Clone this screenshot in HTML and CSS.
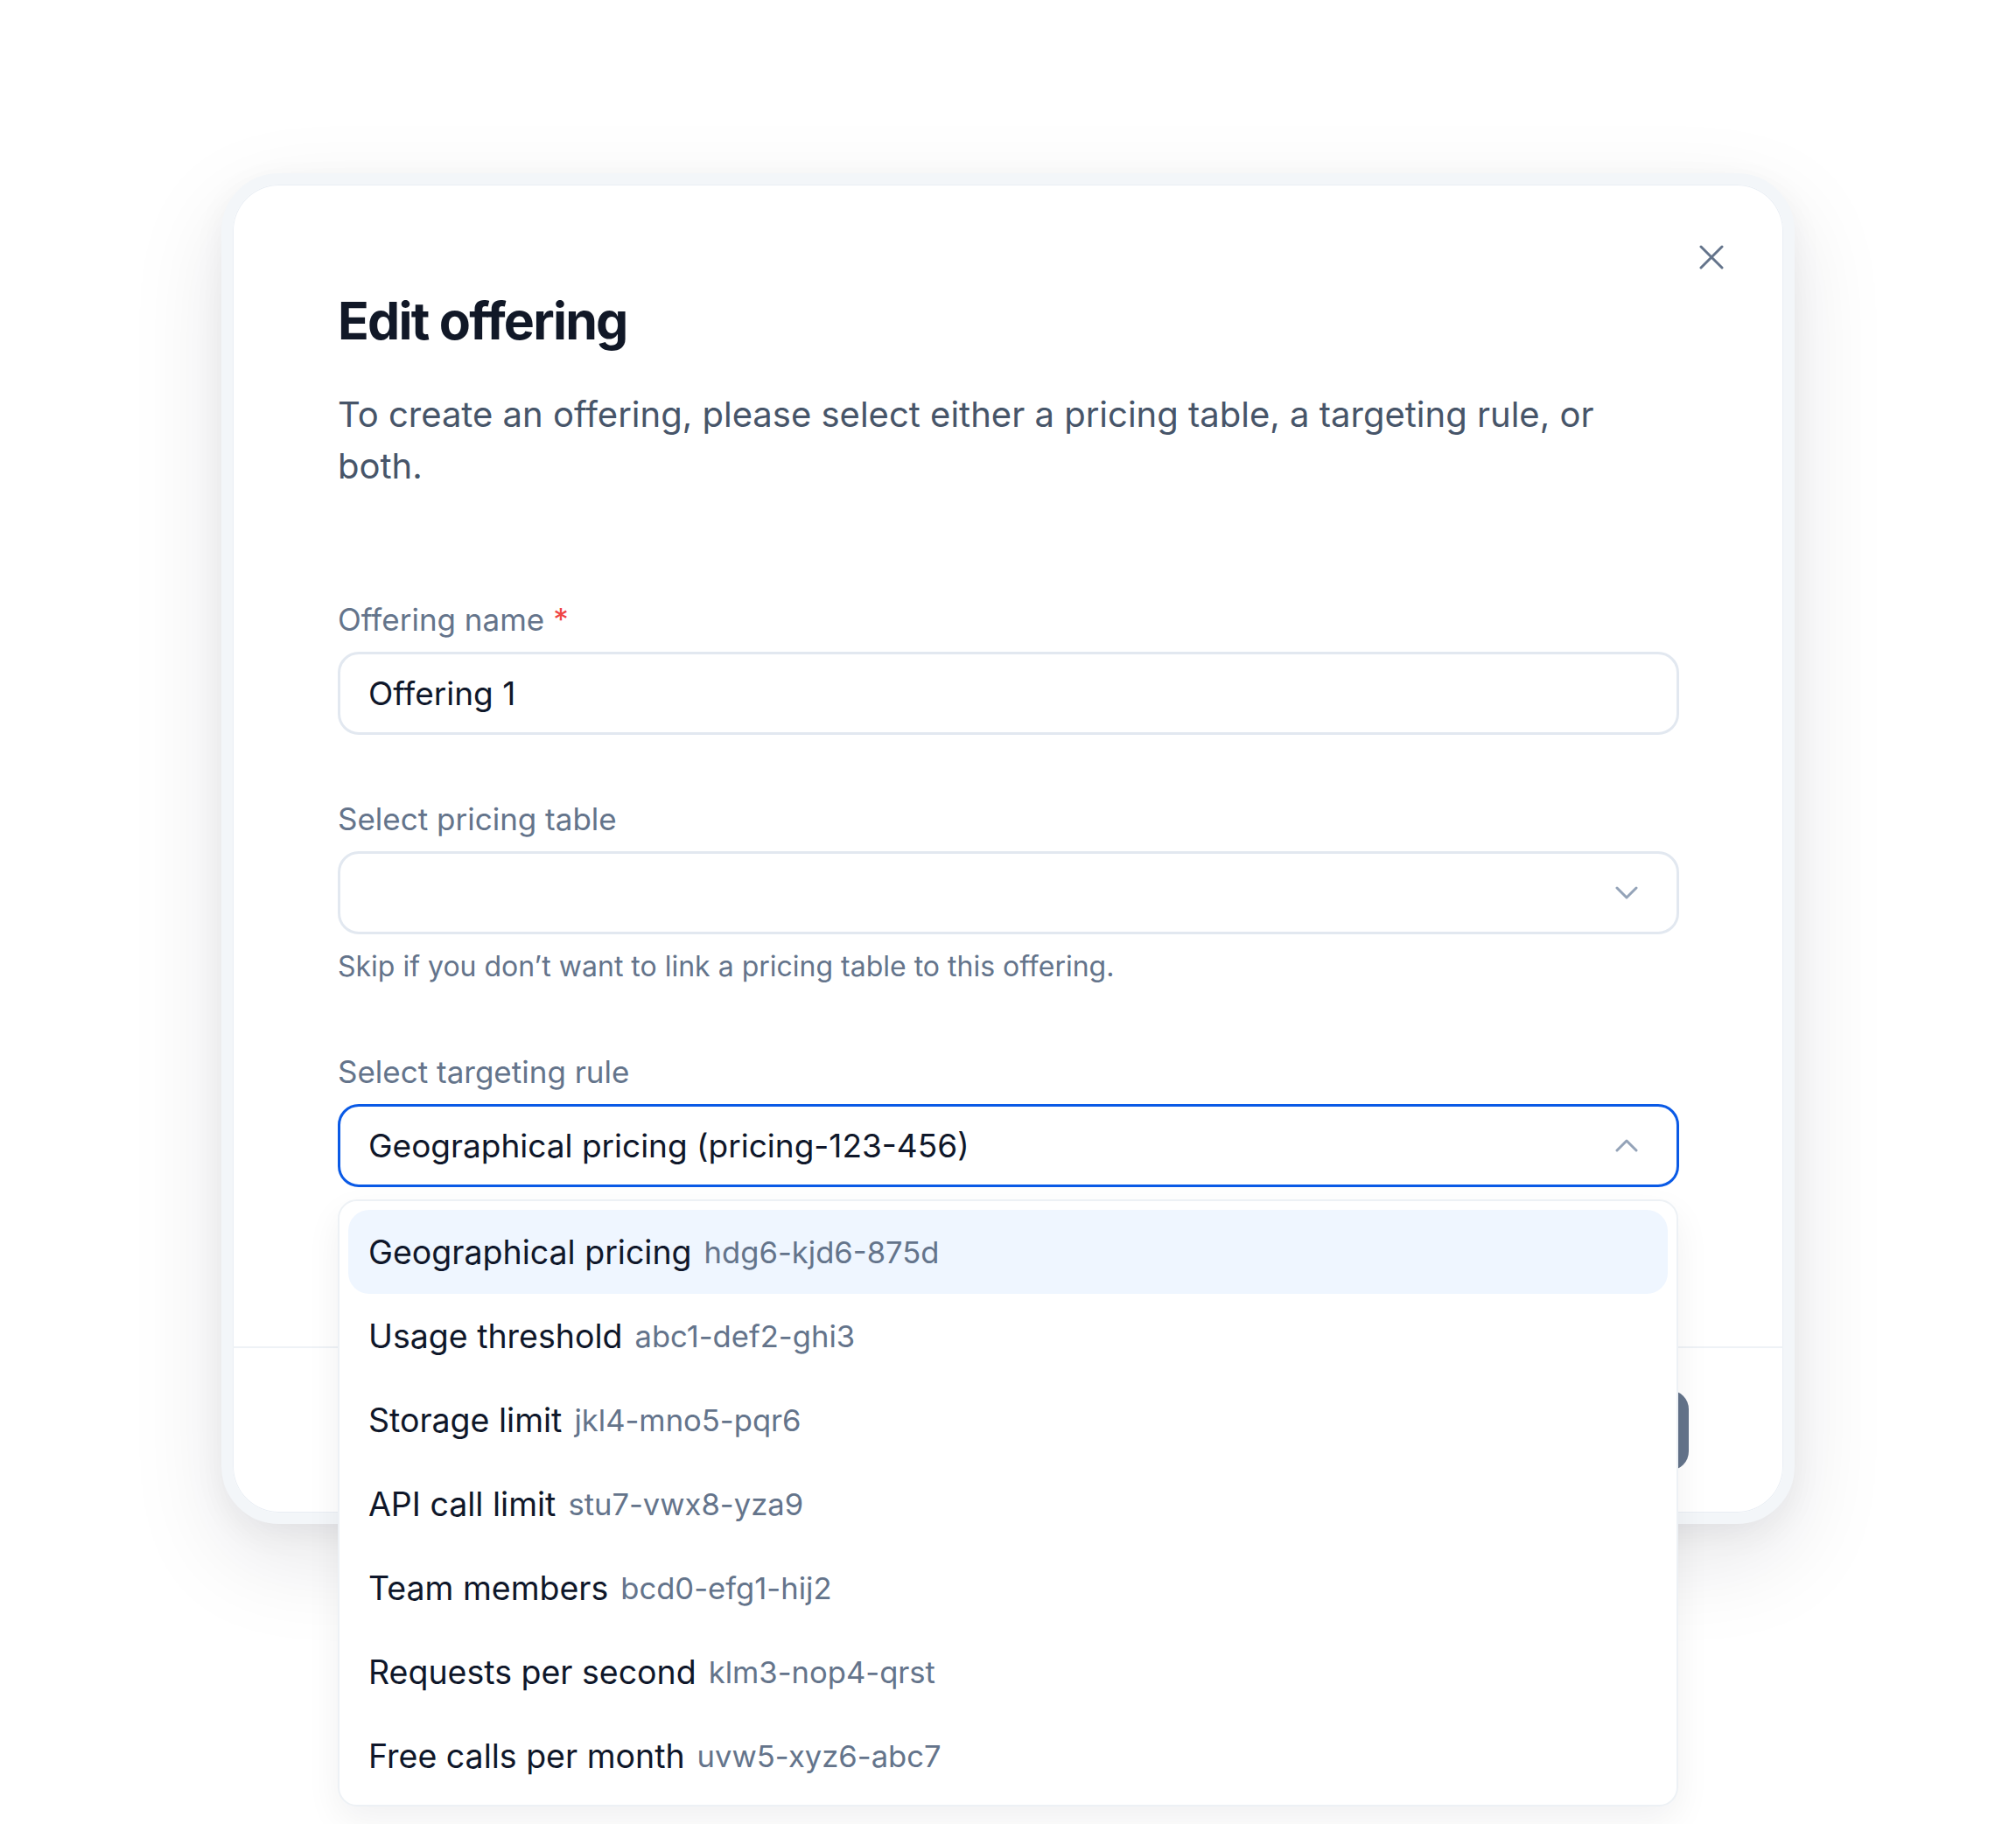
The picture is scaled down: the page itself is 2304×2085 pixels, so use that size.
FILE: index.html
```html
<!DOCTYPE html>
<html lang="en">
<head>
<meta charset="utf-8">
<title>Edit offering</title>
<link rel="stylesheet" href="styles.css">
</head>
<body>
<div class="stage">
  <div class="modal">
    <button class="close" aria-label="Close">
      <svg width="28" height="28" viewBox="0 0 28 28" fill="none"><path d="M2 2L26 26M26 2L2 26" stroke="#64748b" stroke-width="3" stroke-linecap="round"/></svg>
    </button>
    <div class="modal-body">
      <h1 class="title">Edit offering</h1>
      <p class="desc">To create an offering, please select either a pricing table, a targeting rule, or both.</p>

      <div class="field field-first">
        <label class="label">Offering name <span class="req">*</span></label>
        <div class="input"><span class="value">Offering 1</span></div>
      </div>

      <div class="field">
        <label class="label">Select pricing table</label>
        <div class="input select">
          <span class="value"></span>
          <svg class="chev" width="26" height="15" viewBox="0 0 26 15" fill="none"><path d="M2 2L13 13L24 2" stroke="#94a3b8" stroke-width="3" stroke-linecap="round" stroke-linejoin="round"/></svg>
        </div>
        <p class="hint">Skip if you don’t want to link a pricing table to this offering.</p>
      </div>

      <div class="field field-last">
        <label class="label">Select targeting rule</label>
        <div class="select-wrap">
          <div class="input select focused">
            <span class="value">Geographical pricing (pricing-123-456)</span>
            <svg class="chev" width="26" height="15" viewBox="0 0 26 15" fill="none"><path d="M2 13L13 2L24 13" stroke="#94a3b8" stroke-width="3" stroke-linecap="round" stroke-linejoin="round"/></svg>
          </div>
          <ul class="menu">
            <li class="item active"><span class="name">Geographical pricing</span><span class="id">hdg6-kjd6-875d</span></li>
            <li class="item"><span class="name">Usage threshold</span><span class="id">abc1-def2-ghi3</span></li>
            <li class="item"><span class="name">Storage limit</span><span class="id">jkl4-mno5-pqr6</span></li>
            <li class="item"><span class="name">API call limit</span><span class="id">stu7-vwx8-yza9</span></li>
            <li class="item"><span class="name">Team members</span><span class="id">bcd0-efg1-hij2</span></li>
            <li class="item"><span class="name">Requests per second</span><span class="id">klm3-nop4-qrst</span></li>
            <li class="item"><span class="name">Free calls per month</span><span class="id">uvw5-xyz6-abc7</span></li>
          </ul>
        </div>
      </div>
    </div>
    <div class="modal-footer">
      <button class="btn btn-secondary">Cancel</button>
      <button class="btn btn-primary">Save</button>
    </div>
  </div>
</div>
</body>
</html>
```

FILE: styles.css
```css
* { box-sizing: border-box; }

html, body {
  margin: 0;
  padding: 0;
  background: #ffffff;
}

body {
  font-family: Inter, "Noto Sans", "Liberation Sans", sans-serif;
  color: #0f172a;
}

.stage {
  display: flex;
  justify-content: center;
  padding-top: 198px;
  min-height: 2085px;
}

.modal {
  position: relative;
  width: 1798px;
  background: #ffffff;
  border: 13px solid #f3f6f9;
  border-radius: 66px;
  box-shadow:
    inset 0 0 0 1px #e9eef4,
    0 40px 110px rgba(15, 23, 42, 0.10),
    0 12px 36px rgba(15, 23, 42, 0.05);
  align-self: flex-start;
}

.close {
  position: absolute;
  top: 69px;
  right: 68px;
  width: 28px;
  height: 28px;
  padding: 0;
  border: 0;
  background: none;
  display: flex;
}

.modal-body {
  padding: 120px 119px 182px 120px;
}

.title {
  margin: 0;
  font-size: 59px;
  line-height: 72px;
  font-weight: 700;
  letter-spacing: -0.03em;
  color: #111827;
}

.desc {
  margin: 42px 0 0;
  font-size: 40px;
  line-height: 58.5px;
  color: #475569;
}

.field { margin-top: 72px; }
.field-first { margin-top: 122px; }
.field-last { margin-top: 75px; }

.label {
  display: block;
  font-size: 35px;
  line-height: 48px;
  color: #64748b;
  margin-bottom: 13px;
}

.req { color: #ef4444; }

.input {
  height: 95px;
  border: 3px solid #e2e8f0;
  border-radius: 24px;
  padding: 0 44px 0 32px;
  display: flex;
  align-items: center;
  justify-content: space-between;
  background: #fff;
}

.value {
  font-size: 37px;
  line-height: 48px;
  color: #0f172a;
}

.input.focused { border-color: #0a5ae6; }

.chev { flex: none; }

.hint {
  margin: 16px 0 0;
  font-size: 32px;
  line-height: 42px;
  color: #64748b;
}

.select-wrap { position: relative; }

.menu {
  position: absolute;
  z-index: 10;
  top: calc(100% + 14px);
  left: 0;
  right: 1px;
  margin: 0;
  padding: 10px 10px 8px;
  list-style: none;
  background: #ffffff;
  border: 2px solid #edf1f5;
  border-radius: 22px;
  box-shadow: 0 16px 40px rgba(15, 23, 42, 0.06);
}

.item {
  height: 96px;
  display: flex;
  align-items: center;
  gap: 14px;
  padding: 0 23px;
  border-radius: 24px;
}

.item.active { background: #eff6ff; }

.name { color: #0f172a; font-size: 37.5px; }
.id { color: #64748b; font-size: 34.6px; }

.modal-footer {
  border-top: 2px solid #eef2f6;
  height: 190px;
  display: flex;
  align-items: center;
  justify-content: flex-end;
  gap: 24px;
  padding: 0 108px 0 120px;
}

.btn {
  height: 92px;
  border-radius: 22px;
  font-family: inherit;
  font-size: 34px;
  font-weight: 600;
  padding: 0 48px;
}

.btn-secondary {
  background: #fff;
  border: 3px solid #e2e8f0;
  color: #334155;
}

.btn-primary {
  background: #64748b;
  border: 0;
  color: #ffffff;
}
```
